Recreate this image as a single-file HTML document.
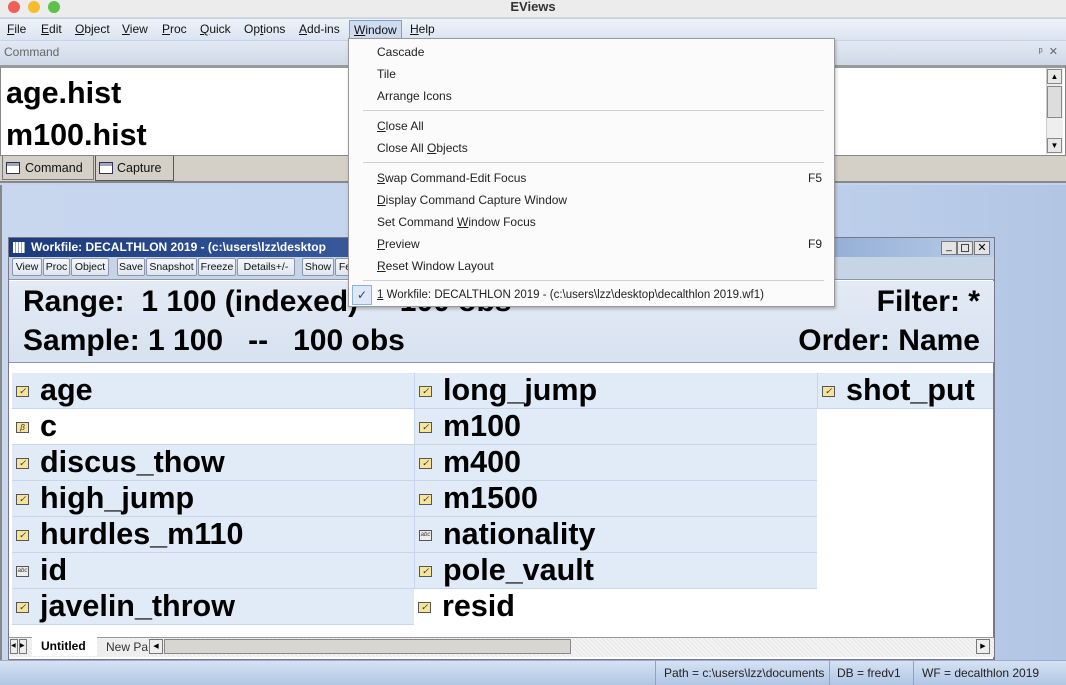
<!DOCTYPE html>
<html><head><meta charset="utf-8">
<style>
*{box-sizing:border-box;margin:0;padding:0}
body{width:1066px;height:685px;overflow:hidden;position:relative;font-family:"Liberation Sans",Arial,sans-serif;background:#c4d4ec}
.a{position:absolute}
.u{text-decoration:underline}
.btn{position:absolute;top:1px;height:18px;border:1px solid #8a97ab;border-radius:2px;background:linear-gradient(#f4f7fb,#dfe6f0);font-size:10.5px;line-height:16px;text-align:center;color:#111}
.row{position:absolute;height:36px;border-bottom:1px solid #c8d6ea;background:#e1eaf7;font-size:30.5px;font-weight:bold;line-height:35px;color:#000;padding-left:28px;white-space:nowrap;overflow:hidden}
.w{background:#fff}
.ic{position:absolute;left:4px;top:13px;width:13px;height:11px;border:1px solid #555;background:#f5e49a;font-size:9px;line-height:9px;text-align:center;color:#333;font-weight:normal}
.mi{position:absolute;left:28px;font-size:12px;color:#222}
.sep{position:absolute;left:14px;right:10px;height:1px;background:#d0d0d0}
</style></head><body>
<div class="a" style="left:0;top:0;width:1066px;height:18px;background:#ececec;border-bottom:1px solid #d6d6d6"></div>
<div class="a" style="left:8px;top:1px;width:12px;height:12px;border-radius:50%;background:#ee5f57"></div>
<div class="a" style="left:28px;top:1px;width:12px;height:12px;border-radius:50%;background:#f5bc2f"></div>
<div class="a" style="left:48px;top:1px;width:12px;height:12px;border-radius:50%;background:#5cc24a"></div>
<div class="a" style="left:0;top:0;width:1066px;text-align:center;font-size:13px;font-weight:bold;color:#333;line-height:14px">EViews</div>
<div class="a" style="left:0;top:19px;width:1066px;height:21px;background:linear-gradient(#eef3fa,#dbe4f0);font-size:12px;line-height:21px;color:#111">
<span class="a" style="left:7px"><span class="u">F</span>ile</span>
<span class="a" style="left:41px"><span class="u">E</span>dit</span>
<span class="a" style="left:75px"><span class="u">O</span>bject</span>
<span class="a" style="left:122px"><span class="u">V</span>iew</span>
<span class="a" style="left:162px"><span class="u">P</span>roc</span>
<span class="a" style="left:200px"><span class="u">Q</span>uick</span>
<span class="a" style="left:244px">Op<span class="u">t</span>ions</span>
<span class="a" style="left:299px"><span class="u">A</span>dd-ins</span>
<span class="a" style="left:349px;top:1px;height:19px;line-height:18px;padding:0 4px;border:1px solid #7f9fc8;background:#cfdcf0"><span class="u">W</span>indow</span>
<span class="a" style="left:410px"><span class="u">H</span>elp</span>
</div>
<div class="a" style="left:0;top:41px;width:1066px;height:25px;background:linear-gradient(#e2e9f3,#cfd9e7);border-bottom:1px solid #999;font-size:12px;color:#666;line-height:22px;padding-left:4px">Command<span class="a" style="right:8px;top:0;font-size:11px;color:#666">ᵖ &nbsp;✕</span></div>
<div class="a" style="left:0;top:66px;width:1066px;height:90px;background:#fff;border:1px solid #888;border-top:2px solid #999"></div>
<div class="a" style="left:6px;top:72px;font-size:30.5px;font-weight:bold;line-height:42px;color:#000">age.hist<br>m100.hist</div>
<div class="a" style="left:1046px;top:68px;width:17px;height:86px;background:#eee;border-left:1px solid #ccc"></div>
<div class="a" style="left:1047px;top:69px;width:15px;height:15px;background:#e8e8e8;border:1px solid #888;font-size:8px;text-align:center;line-height:13px">▲</div>
<div class="a" style="left:1047px;top:86px;width:15px;height:32px;background:#ddd;border:1px solid #888"></div>
<div class="a" style="left:1047px;top:138px;width:15px;height:15px;background:#e8e8e8;border:1px solid #888;font-size:8px;text-align:center;line-height:13px">▼</div>
<div class="a" style="left:0;top:156px;width:1066px;height:27px;background:#d4d0c8;border-bottom:2px solid #888"></div>
<div class="a" style="left:2px;top:156px;width:92px;height:24px;background:#d4d0c8;border:1px solid #777;border-top:none;font-size:12.5px;line-height:24px;padding-left:22px;color:#111">Command</div>
<div class="a" style="left:95px;top:156px;width:79px;height:25px;background:#d4d0c8;border:1px solid #555;border-top:none;font-size:12.5px;line-height:24px;padding-left:21px;color:#111">Capture</div>
<div class="a" style="left:6px;top:162px;width:14px;height:12px;border:1px solid #335;background:linear-gradient(#9ab 0 3px,#fff 3px)"></div>
<div class="a" style="left:99px;top:162px;width:14px;height:12px;border:1px solid #335;background:linear-gradient(#9ab 0 3px,#fff 3px)"></div>
<div class="a" style="left:0;top:185px;width:1066px;height:475px;background:linear-gradient(90deg,#c8d7ee,#c0d2ec 70%,#b2c6e4);border-left:2px solid #888"></div>
<div class="a" style="left:8px;top:237px;width:987px;height:423px;background:#fff;border:1px solid #778;border-right:2px solid #778"></div>
<div class="a" style="left:9px;top:238px;width:985px;height:19px;background:linear-gradient(90deg,#1c3a7c,#3a5ea0 40%,#b8cdea);color:#fff;font-weight:bold;font-size:12px;line-height:19px;padding-left:22px;white-space:nowrap;overflow:hidden">Workfile: DECALTHLON 2019 - (c:\users\lzz\desktop</div>
<div class="a" style="left:13px;top:242px;width:12px;height:11px;background:repeating-linear-gradient(90deg,#fff 0 2px,#9ab 2px 3px)"></div>
<div class="a" style="left:941px;top:241px;width:16px;height:14px;background:#e4e4e4;border:1px solid #777;font-size:10px;line-height:10px;text-align:center">_</div>
<div class="a" style="left:957px;top:241px;width:16px;height:14px;background:#e4e4e4;border:1px solid #777"><div class="a" style="left:3px;top:2px;width:8px;height:8px;border:1px solid #444"></div></div>
<div class="a" style="left:974px;top:241px;width:16px;height:14px;background:#e4e4e4;border:1px solid #777;font-size:11px;line-height:12px;text-align:center">✕</div>
<div class="a" style="left:9px;top:257px;width:985px;height:23px;background:#c7d4e6;border-bottom:1px solid #8898b0">
<div class="btn" style="left:3px;width:30px">View</div>
<div class="btn" style="left:34px;width:27px">Proc</div>
<div class="btn" style="left:62px;width:38px">Object</div>
<div class="btn" style="left:108px;width:28px">Save</div>
<div class="btn" style="left:137px;width:51px">Snapshot</div>
<div class="btn" style="left:189px;width:38px">Freeze</div>
<div class="btn" style="left:228px;width:58px">Details+/-</div>
<div class="btn" style="left:293px;width:32px">Show</div>
<div class="btn" style="left:326px;width:20px">Fe</div>
</div>
<div class="a" style="left:9px;top:281px;width:985px;height:82px;background:linear-gradient(#e3eaf5,#d8e2f0);border-bottom:1px solid #8898b0;font-size:30px;font-weight:bold;color:#000;white-space:nowrap">
<div class="a" style="left:14px;top:4px">Range:&nbsp;&nbsp;1 100 (indexed)&nbsp;&nbsp;&nbsp;&nbsp;&nbsp;100 obs</div>
<div class="a" style="right:14px;top:4px">Filter: *</div>
<div class="a" style="left:14px;top:43px">Sample: 1 100&nbsp;&nbsp;&nbsp;--&nbsp;&nbsp;&nbsp;100 obs</div>
<div class="a" style="right:14px;top:43px">Order: Name</div>
</div>
<div class="row" style="left:12px;top:373px;width:402px"><i class="ic">✓</i>age</div>
<div class="row w" style="left:12px;top:409px;width:402px"><i class="ic" style="font-style:italic;font-size:8px">β</i>c</div>
<div class="row" style="left:12px;top:445px;width:402px"><i class="ic">✓</i>discus_thow</div>
<div class="row" style="left:12px;top:481px;width:402px"><i class="ic">✓</i>high_jump</div>
<div class="row" style="left:12px;top:517px;width:402px"><i class="ic">✓</i>hurdles_m110</div>
<div class="row" style="left:12px;top:553px;width:402px"><i class="ic" style="font-size:6px;background:#eee">abc</i>id</div>
<div class="row" style="left:12px;top:589px;width:402px"><i class="ic">✓</i>javelin_throw</div>
<div class="row" style="left:414px;top:373px;width:403px;border-left:1px solid #c8d6ea"><i class="ic">✓</i>long_jump</div>
<div class="row" style="left:414px;top:409px;width:403px;border-left:1px solid #c8d6ea"><i class="ic">✓</i>m100</div>
<div class="row" style="left:414px;top:445px;width:403px;border-left:1px solid #c8d6ea"><i class="ic">✓</i>m400</div>
<div class="row" style="left:414px;top:481px;width:403px;border-left:1px solid #c8d6ea"><i class="ic">✓</i>m1500</div>
<div class="row" style="left:414px;top:517px;width:403px;border-left:1px solid #c8d6ea"><i class="ic" style="font-size:6px;background:#eee">abc</i>nationality</div>
<div class="row" style="left:414px;top:553px;width:403px;border-left:1px solid #c8d6ea"><i class="ic">✓</i>pole_vault</div>
<div class="row w" style="left:414px;top:589px;width:403px;border-bottom:none"><i class="ic">✓</i>resid</div>
<div class="row" style="left:817px;top:373px;width:176px;border-left:1px solid #c8d6ea"><i class="ic">✓</i>shot_put</div>
<div class="a" style="left:9px;top:637px;width:985px;height:20px;background:repeating-linear-gradient(45deg,#e6e6e6 0 1px,#f4f4f4 1px 3px);border-top:1px solid #999"></div>
<div class="a" style="left:10px;top:639px;width:8px;height:15px;border:1px solid #777;background:#eee;font-size:6px;line-height:13px">◀</div>
<div class="a" style="left:19px;top:639px;width:8px;height:15px;border:1px solid #777;background:#eee;font-size:6px;line-height:13px">▶</div>
<div class="a" style="left:32px;top:637px;width:65px;height:19px;background:#fff;font-size:12px;font-weight:bold;line-height:18px;padding-left:9px">Untitled</div>
<div class="a" style="left:98px;top:639px;width:50px;height:17px;background:#eee;font-size:12px;line-height:16px;padding-left:8px;color:#333;overflow:hidden;white-space:nowrap">New Pa</div>
<div class="a" style="left:149px;top:639px;width:14px;height:15px;border:1px solid #777;background:#eee;font-size:7px;line-height:13px;text-align:center">◀</div>
<div class="a" style="left:164px;top:639px;width:407px;height:15px;border:1px solid #888;background:#d8d6d0"></div>
<div class="a" style="left:976px;top:639px;width:14px;height:15px;border:1px solid #777;background:#eee;font-size:7px;line-height:13px;text-align:center">▶</div>
<div class="a" style="left:0;top:660px;width:1066px;height:25px;background:linear-gradient(#d6e2f3,#b0c6e5);border-top:1px solid #9aaccc;font-size:12px;color:#222;line-height:24px;white-space:nowrap">
<span class="a" style="left:655px;padding-left:8px;border-left:1px solid #8ea2c2;width:174px">Path = c:\users\lzz\documents</span>
<span class="a" style="left:829px;padding-left:7px;border-left:1px solid #8ea2c2;width:84px">DB = fredv1</span>
<span class="a" style="left:913px;padding-left:8px;border-left:1px solid #8ea2c2">WF = decalthlon 2019</span>
</div>
<div class="a" style="left:348px;top:38px;width:487px;height:269px;background:#fbfbfb;border:1px solid #999;box-shadow:1px 2px 3px rgba(0,0,0,.25)">
<div class="mi" style="top:6px">Cascade</div>
<div class="mi" style="top:28px">Tile</div>
<div class="mi" style="top:50px">Arrange Icons</div>
<div class="sep" style="top:71px"></div>
<div class="mi" style="top:80px"><span class="u">C</span>lose All</div>
<div class="mi" style="top:102px">Close All <span class="u">O</span>bjects</div>
<div class="sep" style="top:123px"></div>
<div class="mi" style="top:132px"><span class="u">S</span>wap Command-Edit Focus</div>
<div class="mi" style="top:132px;left:459px">F5</div>
<div class="mi" style="top:154px"><span class="u">D</span>isplay Command Capture Window</div>
<div class="mi" style="top:176px">Set Command <span class="u">W</span>indow Focus</div>
<div class="mi" style="top:198px"><span class="u">P</span>review</div>
<div class="mi" style="top:198px;left:459px">F9</div>
<div class="mi" style="top:220px"><span class="u">R</span>eset Window Layout</div>
<div class="sep" style="top:241px"></div>
<div class="a" style="left:3px;top:246px;width:20px;height:20px;border:1px solid #8fb0d8;background:#dce8f6;color:#246;font-size:12px;line-height:18px;text-align:center">✓</div>
<div class="mi" style="top:250px;font-size:11.5px;white-space:nowrap"><span class="u">1</span> Workfile: DECALTHLON 2019 - (c:\users\lzz\desktop\decalthlon 2019.wf1)</div>
</div>
</body></html>
